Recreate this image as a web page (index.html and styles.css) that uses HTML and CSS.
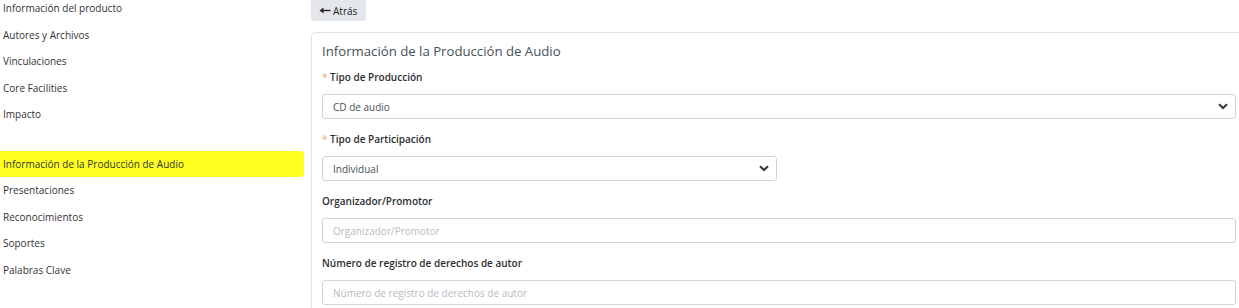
FILE: index.html
```html
<!DOCTYPE html>
<html lang="es">
<head>
<meta charset="utf-8">
<title>Información de la Producción de Audio</title>
<link rel="stylesheet" href="styles.css">
</head>
<body>
<div class="layout">
  <nav class="sidebar">
    <ul class="menu">
      <li class="item">Información del producto</li>
      <li class="item">Autores y Archivos</li>
      <li class="item">Vinculaciones</li>
      <li class="item">Core Facilities</li>
      <li class="item">Impacto</li>
      <li class="spacer"></li>
      <li class="item active">Información de la Producción de Audio</li>
      <li class="item">Presentaciones</li>
      <li class="item">Reconocimientos</li>
      <li class="item">Soportes</li>
      <li class="item">Palabras Clave</li>
    </ul>
  </nav>
  <main class="main">
    <button class="back" type="button"><svg class="arrow" viewBox="0 0 12 7" width="12" height="7"><path d="M0.5 3.5 L4.5 0.5 L4.5 6.5 Z" fill="#222"/><path d="M4 3.5 H11.5" stroke="#222" stroke-width="1.4"/></svg><span>Atrás</span></button>
    <section class="card">
      <h2 class="card-title">Información de la Producción de Audio</h2>
      <div class="field">
        <label class="label"><span class="req">*</span> Tipo de Producción</label>
        <div class="select"><span class="value">CD de audio</span>
          <svg class="chev" viewBox="0 0 10 7" width="10" height="7"><path d="M1 1.2 L5 5 L9 1.2" fill="none" stroke="#343a40" stroke-width="2.2"/></svg>
        </div>
      </div>
      <div class="field">
        <label class="label"><span class="req">*</span> Tipo de Participación</label>
        <div class="select half"><span class="value">Individual</span>
          <svg class="chev" viewBox="0 0 10 7" width="10" height="7"><path d="M1 1.2 L5 5 L9 1.2" fill="none" stroke="#343a40" stroke-width="2.2"/></svg>
        </div>
      </div>
      <div class="field">
        <label class="label">Organizador/Promotor</label>
        <div class="input"><span class="placeholder">Organizador/Promotor</span></div>
      </div>
      <div class="field">
        <label class="label">Número de registro de derechos de autor</label>
        <div class="input"><span class="placeholder">Número de registro de derechos de autor</span></div>
      </div>
    </section>
  </main>
</div>
</body>
</html>
```

FILE: styles.css
```css
html, body {
  margin: 0;
  padding: 0;
  overflow: hidden;
  background: #fff;
}
body {
  font-family: "Open Sans", "Noto Sans", sans-serif;
  font-size: 10px;
  color: #333;
}
.layout {
  display: flex;
  align-items: flex-start;
}
.sidebar {
  width: 304px;
  flex: none;
  margin-right: 7px;
}
.menu {
  list-style: none;
  margin: -5px 0 0 0;
  padding: 0;
}
.item {
  height: 26.5px;
  line-height: 26.5px;
  padding-left: 3px;
  color: #333;
  white-space: nowrap;
}
.spacer {
  height: 23.5px;
}
.item.active {
  background: #ffff1f;
  border-radius: 0 4px 4px 0;
  height: 26px;
  line-height: 26px;
}
.main {
  flex: 1;
  margin-right: -8px;
}
.back {
  display: flex;
  align-items: center;
  gap: 2px;
  height: 21px;
  width: 55px;
  margin: 0;
  padding: 0 0 0 8px;
  border: none;
  border-radius: 0 0 3px 3px;
  background: #e3e6ea;
  color: #222;
  font-family: inherit;
  font-size: 10px;
}
.arrow {
  display: block;
}
.card {
  margin-top: 11px;
  border: 1px solid #dfe2e6;
  border-radius: 4px;
  padding: 8px 10px 0 10px;
}
.card-title {
  margin: 0 0 6px 0;
  font-size: 13.2px;
  font-weight: 400;
  color: #474f58;
  line-height: 20px;
}
.field {
  margin-bottom: 10px;
}
.label {
  display: block;
  font-weight: 600;
  color: #2a2e33;
  line-height: 20px;
  margin-bottom: 7px;
}
.req {
  color: #f4a46c;
  font-weight: 400;
}
.select, .input {
  box-sizing: border-box;
  height: 25px;
  border: 1px solid #ced4da;
  border-radius: 3px;
  display: flex;
  align-items: center;
  justify-content: space-between;
  padding: 0 7px 0 10px;
  color: #495057;
}
.select.half {
  width: 455px;
}
.placeholder {
  color: #b7bcc2;
}
```
